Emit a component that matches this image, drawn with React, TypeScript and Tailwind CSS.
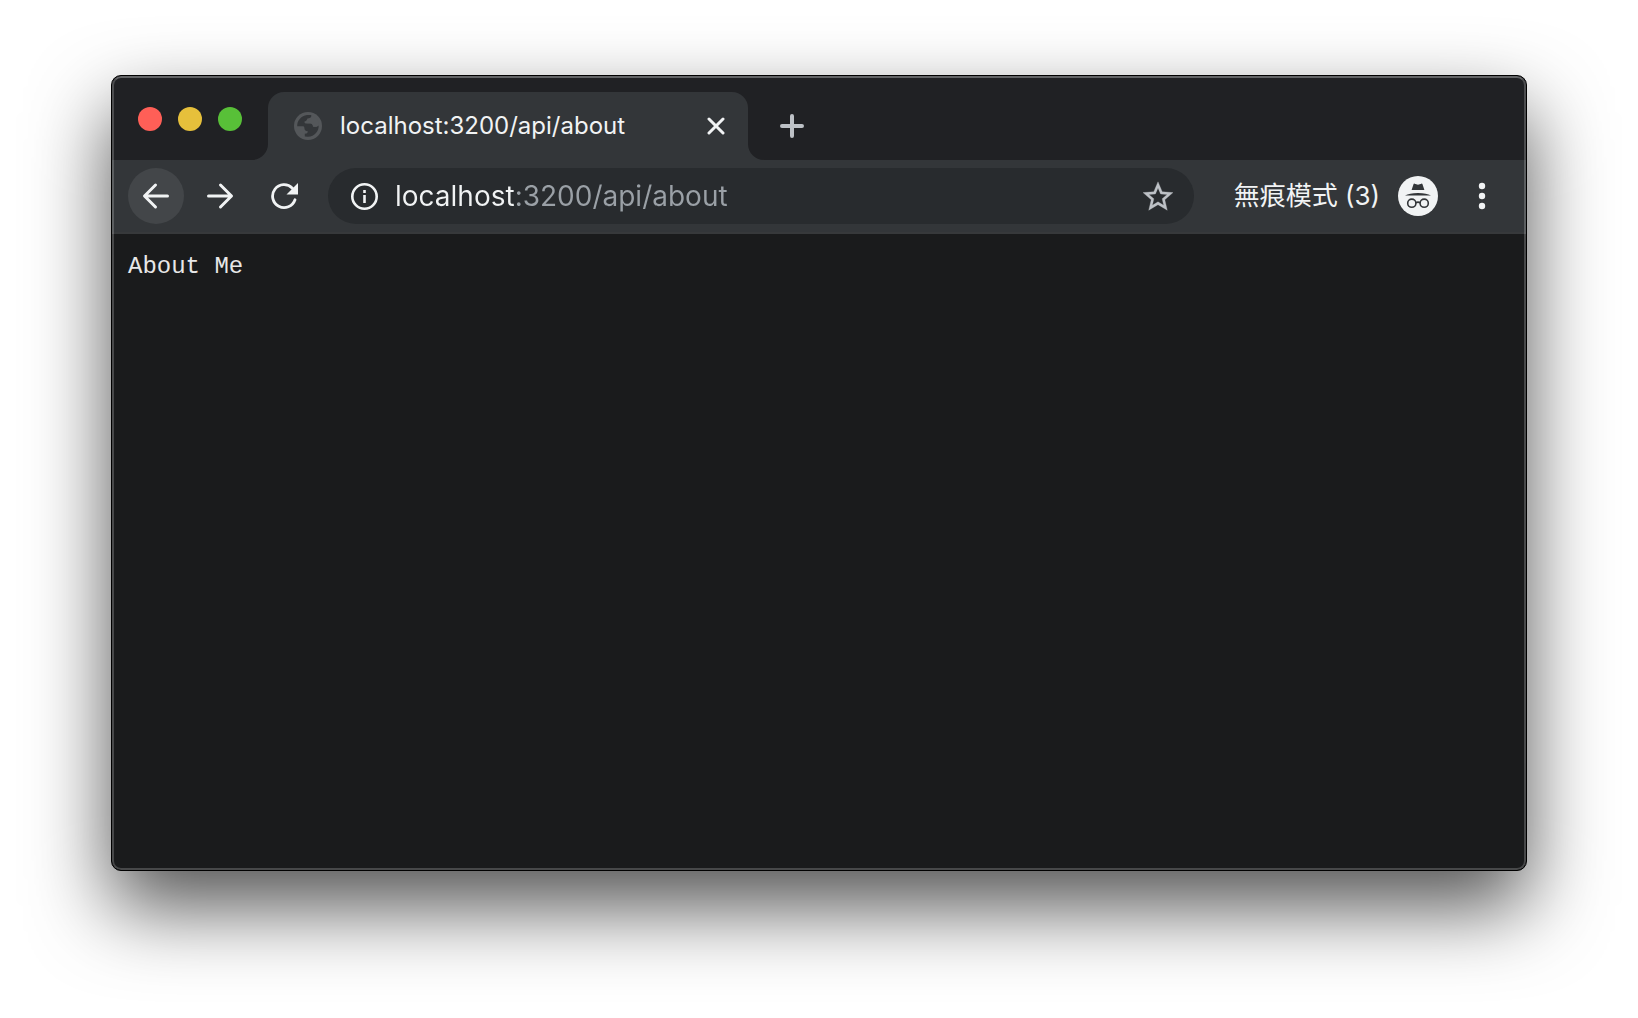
import React from "react";

type IconProps = { className?: string };

const GlobeIcon = ({ className }: IconProps) => (
  <svg viewBox="0 0 28 28" className={className} aria-hidden="true">
    <circle cx="14" cy="14" r="14" fill="#54575a" />
    <path
      d="M3.2 14.2C3 8.600 7.500 3.600 13 3.100h4.200c.5 1.700-.5 3-2.200 3.200l-1.600.3c-.6 1.900-1.500 2.800-3.200 3.200.4 1.400 1.200 1.700 2.600 1.700h3.400c2 0 2.600 1.400 2.800 3.200h3.200c1.200 0 1.300-1.200 2.400-1.400.6 5.600-4 11.300-10.600 11.500l-3.200-.3v-2.700c2 0 3-.8 3-2.500-2.600-.2-3.400-1.500-3.400-3.300 0-1.400-.8-1.800-2.200-1.800z"
      fill="#333639"
    />
    <path
      d="M18 3.800c4.100 1.500 6.900 5.200 6.900 9.800-1 .4-1.400 1.200-2.600 1.200h-2.800c-.3-2.200-1.500-3.500-3.500-3.500h-3c1.200-.7 1.500-1.700 1.700-3.100 2-.2 3.700-1.900 3.300-4.400z"
      fill="#54575a"
    />
  </svg>
);

const CloseIcon = ({ className }: IconProps) => (
  <svg viewBox="0 0 18 18" className={className} fill="none" stroke="currentColor" strokeWidth="3" strokeLinecap="round" aria-hidden="true">
    <path d="M2 2l14 14M16 2L2 16" />
  </svg>
);

const PlusIcon = ({ className }: IconProps) => (
  <svg viewBox="0 0 24 24" className={className} fill="none" stroke="currentColor" strokeWidth="4" strokeLinecap="round" aria-hidden="true">
    <path d="M12 2v20M2 12h20" />
  </svg>
);

const ArrowIcon = ({ className }: IconProps) => (
  <svg viewBox="0 0 28 28" className={className} fill="none" stroke="currentColor" strokeWidth="3" strokeLinecap="round" strokeLinejoin="round" aria-hidden="true">
    <path d="M25.500 14H3M13.500 3L2.500 14l11 11" />
  </svg>
);

const ReloadIcon = ({ className }: IconProps) => (
  <svg viewBox="0 0 28 28" className={className} fill="none" stroke="currentColor" strokeWidth="2.8" strokeLinecap="round" aria-hidden="true">
    <path d="M25 17.800A11.500 11.500 0 1 1 22.400 6.200" />
    <path d="M28 1v11.500H16.500z" fill="currentColor" stroke="none" />
  </svg>
);

const InfoIcon = ({ className }: IconProps) => (
  <svg viewBox="0 0 28 28" className={className} fill="none" stroke="currentColor" strokeWidth="2.6" aria-hidden="true">
    <circle cx="13.500" cy="14.500" r="12.200" />
    <path d="M13.500 13v8M13.500 8v3" />
  </svg>
);

const StarIcon = ({ className }: IconProps) => (
  <svg viewBox="2 2 20 19" className={className} fill="currentColor" stroke="currentColor" strokeWidth="0.2" aria-hidden="true">
    <path d="M22 9.240l-7.190-.62L12 2 9.190 8.630 2 9.240l5.460 4.730L5.820 21 12 17.270 18.180 21l-1.630-7.030L22 9.240zM12 15.400l-3.760 2.270 1-4.280-3.320-2.880 4.380-.38L12 6.100l1.710 4.040 4.380.38-3.320 2.880 1 4.280L12 15.400z" />
  </svg>
);

const IncognitoIcon = ({ className }: IconProps) => (
  <svg viewBox="0 0 40 40" className={className} aria-hidden="true">
    <circle cx="20" cy="20" r="20" fill="#f1f3f4" />
    <path d="M15.500 8.200c.2-.5.600-.7 1.100-.5l3.400 1 3.400-1c.5-.2.900 0 1.100.5l1.900 5.800H13.600zM7 19.600c3-1.500 7-2.600 13-2.600s10 1.100 13 2.600z" fill="#333639" />
    <g fill="none" stroke="#333639" strokeWidth="1.6">
      <circle cx="13.800" cy="27.200" r="4.100" />
      <circle cx="26.200" cy="27.200" r="4.100" />
      <path d="M17.900 26.800c1.300-.9 2.900-.9 4.200 0" />
    </g>
  </svg>
);

const MenuIcon = ({ className }: IconProps) => (
  <svg viewBox="0 0 8 28" className={className} fill="currentColor" aria-hidden="true">
    <circle cx="4" cy="4" r="3.200" />
    <circle cx="4" cy="14" r="3.200" />
    <circle cx="4" cy="24" r="3.200" />
  </svg>
);

// Outward curve at the foot of the active tab
const TabFoot = ({ className }: IconProps) => (
  <svg viewBox="0 0 16 16" className={className} aria-hidden="true">
    <path d="M16 0v16H0C8.800 16 16 8.800 16 0z" fill="#333639" />
  </svg>
);

const TabStrip: React.FC = () => (
  <div className="flex h-[84px] items-end bg-[#202124]">
    <div className="flex gap-4 self-start pt-[31px] pl-[26px]">
      <button aria-label="Close window" className="size-6 rounded-full bg-[#ff5f57]" />
      <button aria-label="Minimize window" className="size-6 rounded-full bg-[#e6c03b]" />
      <button aria-label="Zoom window" className="size-6 rounded-full bg-[#58c038]" />
    </div>

    <div className="ml-[10px] flex items-end">
      <TabFoot className="size-4" />
      <div className="flex h-[68px] w-[480px] items-center rounded-t-2xl bg-[#333639] pr-[23px] pl-[26px]">
        <GlobeIcon className="size-7" />
        <span className="ml-[18px] flex-1 text-[24px] leading-7 text-[#f1f3f4]">localhost:3200/api/about</span>
        <button aria-label="Close tab" className="text-[#f1f3f4]">
          <CloseIcon className="size-[18px]" />
        </button>
      </div>
      <TabFoot className="size-4 -scale-x-100" />
    </div>

    <button aria-label="New tab" className="mb-[22px] ml-4 text-[#bdc1c6]">
      <PlusIcon className="size-6" />
    </button>
  </div>
);

const Toolbar: React.FC = () => (
  <div className="flex h-[74px] items-center border-b-2 border-[#37393b] bg-[#333639] pr-10 pl-4 text-[#f1f3f4]">
    <div className="flex gap-2">
      <button aria-label="Back" className="flex size-14 items-center justify-center rounded-full bg-[#434649]">
        <ArrowIcon className="size-7" />
      </button>
      <button aria-label="Forward" className="flex size-14 items-center justify-center rounded-full">
        <ArrowIcon className="size-7 rotate-180" />
      </button>
      <button aria-label="Reload" className="flex size-14 items-center justify-center rounded-full">
        <ReloadIcon className="size-7" />
      </button>
    </div>

    <div className="ml-4 flex h-14 flex-1 items-center rounded-full bg-[#282b2e] pr-[21px] pl-[23px]">
      <InfoIcon className="size-7 shrink-0" />
      {/* host is bright, port and path are dimmed */}
      <input
        type="text"
        aria-label="Address"
        defaultValue="localhost:3200/api/about"
        className="ml-4 min-w-0 flex-1 bg-linear-to-r from-[#f1f3f4] from-[119px] to-[#9aa0a6] to-[119px] bg-clip-text text-[28px] leading-9 text-transparent outline-none"
      />
      <button aria-label="Bookmark this page" className="text-[#bdc1c6]">
        <StarIcon className="size-[30px]" />
      </button>
    </div>

    <button className="ml-10 flex items-center gap-[18px]">
      <span className="text-[26px] leading-9">無痕模式 (3)</span>
      <IncognitoIcon className="size-10" />
    </button>
    <button aria-label="Menu" className="ml-10">
      <MenuIcon className="h-7 w-2" />
    </button>
  </div>
);

const App: React.FC = () => {
  return (
    <div className="flex min-h-screen flex-col bg-white px-[111px] pt-[75px] pb-[147px] font-['Inter','Noto_Sans_CJK_TC',sans-serif]">
      <div className="relative flex flex-1 flex-col overflow-hidden rounded-[10px] border border-black bg-[#1a1b1c] shadow-[0_36px_80px_rgba(0,0,0,0.68)]">
        <TabStrip />
        <Toolbar />
        <main className="flex-1 px-4 pt-4">
          <pre className="font-['Liberation_Mono',monospace] text-[24px] leading-[34px] text-[#e8e8e8]">About Me</pre>
        </main>
        {/* Light rim just inside the window edge */}
        <div className="pointer-events-none absolute inset-0 rounded-[9px] border-2 border-white/20 border-t-white/30" />
      </div>
    </div>
  );
};

export default App;
